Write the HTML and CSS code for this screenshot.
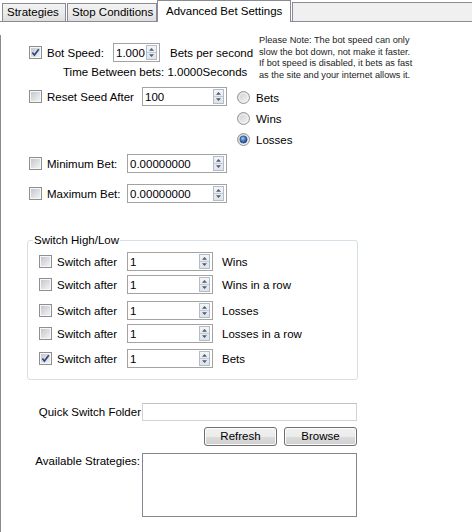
FILE: index.html
```html
<!DOCTYPE html>
<html>
<head>
<meta charset="utf-8">
<title>Advanced Bet Settings</title>
<link rel="stylesheet" href="styles.css">
</head>
<body>
<svg class="defs" width="0" height="0" aria-hidden="true">
  <defs>
    <linearGradient id="cbfill" x1="0" y1="0" x2="1" y2="1">
      <stop offset="0" stop-color="#c4c8ce"/>
      <stop offset="1" stop-color="#f2f2f2"/>
    </linearGradient>
    <linearGradient id="rdfill" x1="0" y1="0" x2="1" y2="1">
      <stop offset="0" stop-color="#c9ccd1"/>
      <stop offset="1" stop-color="#f6f6f6"/>
    </linearGradient>
    <radialGradient id="rddot" cx="0.4" cy="0.35" r="0.7">
      <stop offset="0" stop-color="#9fd0f5"/>
      <stop offset="0.5" stop-color="#3f7bc4"/>
      <stop offset="1" stop-color="#1b3f7c"/>
    </radialGradient>
    <linearGradient id="spfill" x1="0" y1="0" x2="0" y2="1">
      <stop offset="0" stop-color="#f3f5f8"/>
      <stop offset="1" stop-color="#dde3ea"/>
    </linearGradient>
  </defs>
</svg>

<div class="tabstrip">
  <div class="tab tab1">Strategies</div>
  <div class="tab tab2">Stop Conditions</div>
  <div class="tab active">Advanced Bet Settings</div>
  <div class="rest"></div>
</div>

<div class="panel">
  <div class="top">
    <div class="top-left">
      <div class="row r-speed">
        <svg class="cb" viewBox="0 0 13 13"><rect x=".5" y=".5" width="12" height="12" fill="#f7f7f7" stroke="#8e8f8f"/><rect x="2" y="2" width="9" height="9" fill="url(#cbfill)"/><path d="M3.3 6.5 L5.4 9.1 L9.8 3.3" fill="none" stroke="#34478a" stroke-width="1.7"/></svg>
        <span class="lbl w-speed">Bot Speed:</span>
        <div class="num w-46"><span class="val">1.000</span><svg class="spin" viewBox="0 0 11 15"><rect x=".5" y=".5" width="10" height="14" fill="url(#spfill)" stroke="#b4bcc7"/><line x1="1" y1="7.5" x2="10" y2="7.5" stroke="#c3cad3"/><path d="M5.5 3 L3 5.8 H8Z" fill="#4f5c6e"/><path d="M3 9.2 H8 L5.5 12Z" fill="#4f5c6e"/></svg></div>
        <span class="after">Bets per second</span>
      </div>
      <div class="time">Time Between bets: 1.0000Seconds</div>
    </div>
    <div class="note">Please Note: The bot speed can only<br>slow the bot down, not make it faster.<br>If bot speed is disabled, it bets as fast<br>as the site and your internet allows it.</div>
  </div>

  <div class="r-reset">
    <div class="row pad28">
      <svg class="cb" viewBox="0 0 13 13"><rect x=".5" y=".5" width="12" height="12" fill="#f7f7f7" stroke="#8e8f8f"/><rect x="2" y="2" width="9" height="9" fill="url(#cbfill)"/></svg>
      <span class="lbl w-reset">Reset Seed After</span>
      <div class="num w-85"><span class="val">100</span><svg class="spin" viewBox="0 0 11 15"><rect x=".5" y=".5" width="10" height="14" fill="url(#spfill)" stroke="#b4bcc7"/><line x1="1" y1="7.5" x2="10" y2="7.5" stroke="#c3cad3"/><path d="M5.5 3 L3 5.8 H8Z" fill="#4f5c6e"/><path d="M3 9.2 H8 L5.5 12Z" fill="#4f5c6e"/></svg></div>
    </div>
    <div class="radios">
      <div class="radio"><svg class="rd" viewBox="0 0 13 13"><circle cx="6.5" cy="6.5" r="6" fill="url(#rdfill)" stroke="#969799"/><circle cx="6.5" cy="6.5" r="4.3" fill="none" stroke="#f4f4f4" stroke-width=".8"/></svg><span>Bets</span></div>
      <div class="radio"><svg class="rd" viewBox="0 0 13 13"><circle cx="6.5" cy="6.5" r="6" fill="url(#rdfill)" stroke="#969799"/><circle cx="6.5" cy="6.5" r="4.3" fill="none" stroke="#f4f4f4" stroke-width=".8"/></svg><span>Wins</span></div>
      <div class="radio"><svg class="rd" viewBox="0 0 13 13"><circle cx="6.5" cy="6.5" r="6" fill="url(#rdfill)" stroke="#969799"/><circle cx="6.5" cy="6.5" r="3.6" fill="url(#rddot)" stroke="#23437c" stroke-width=".7"/></svg><span>Losses</span></div>
    </div>
  </div>

  <div class="row pad28 r-min">
    <svg class="cb" viewBox="0 0 13 13"><rect x=".5" y=".5" width="12" height="12" fill="#f7f7f7" stroke="#8e8f8f"/><rect x="2" y="2" width="9" height="9" fill="url(#cbfill)"/></svg>
    <span class="lbl w-bet">Minimum Bet:</span>
    <div class="num w-100"><span class="val">0.00000000</span><svg class="spin" viewBox="0 0 11 15"><rect x=".5" y=".5" width="10" height="14" fill="url(#spfill)" stroke="#b4bcc7"/><line x1="1" y1="7.5" x2="10" y2="7.5" stroke="#c3cad3"/><path d="M5.5 3 L3 5.8 H8Z" fill="#4f5c6e"/><path d="M3 9.2 H8 L5.5 12Z" fill="#4f5c6e"/></svg></div>
  </div>

  <div class="row pad28 r-max">
    <svg class="cb" viewBox="0 0 13 13"><rect x=".5" y=".5" width="12" height="12" fill="#f7f7f7" stroke="#8e8f8f"/><rect x="2" y="2" width="9" height="9" fill="url(#cbfill)"/></svg>
    <span class="lbl w-bet">Maximum Bet:</span>
    <div class="num w-100"><span class="val">0.00000000</span><svg class="spin" viewBox="0 0 11 15"><rect x=".5" y=".5" width="10" height="14" fill="url(#spfill)" stroke="#b4bcc7"/><line x1="1" y1="7.5" x2="10" y2="7.5" stroke="#c3cad3"/><path d="M5.5 3 L3 5.8 H8Z" fill="#4f5c6e"/><path d="M3 9.2 H8 L5.5 12Z" fill="#4f5c6e"/></svg></div>
  </div>

  <fieldset class="group">
    <legend>Switch High/Low</legend>
    <div class="grow g1">
      <svg class="cb" viewBox="0 0 13 13"><rect x=".5" y=".5" width="12" height="12" fill="#f7f7f7" stroke="#8e8f8f"/><rect x="2" y="2" width="9" height="9" fill="url(#cbfill)"/></svg>
      <span class="lbl w-sw">Switch after</span>
      <div class="num w-86"><span class="val">1</span><svg class="spin" viewBox="0 0 11 15"><rect x=".5" y=".5" width="10" height="14" fill="url(#spfill)" stroke="#b4bcc7"/><line x1="1" y1="7.5" x2="10" y2="7.5" stroke="#c3cad3"/><path d="M5.5 3 L3 5.8 H8Z" fill="#4f5c6e"/><path d="M3 9.2 H8 L5.5 12Z" fill="#4f5c6e"/></svg></div>
      <span class="suffix">Wins</span>
    </div>
    <div class="grow g2">
      <svg class="cb" viewBox="0 0 13 13"><rect x=".5" y=".5" width="12" height="12" fill="#f7f7f7" stroke="#8e8f8f"/><rect x="2" y="2" width="9" height="9" fill="url(#cbfill)"/></svg>
      <span class="lbl w-sw">Switch after</span>
      <div class="num w-86"><span class="val">1</span><svg class="spin" viewBox="0 0 11 15"><rect x=".5" y=".5" width="10" height="14" fill="url(#spfill)" stroke="#b4bcc7"/><line x1="1" y1="7.5" x2="10" y2="7.5" stroke="#c3cad3"/><path d="M5.5 3 L3 5.8 H8Z" fill="#4f5c6e"/><path d="M3 9.2 H8 L5.5 12Z" fill="#4f5c6e"/></svg></div>
      <span class="suffix">Wins in a row</span>
    </div>
    <div class="grow g3">
      <svg class="cb" viewBox="0 0 13 13"><rect x=".5" y=".5" width="12" height="12" fill="#f7f7f7" stroke="#8e8f8f"/><rect x="2" y="2" width="9" height="9" fill="url(#cbfill)"/></svg>
      <span class="lbl w-sw">Switch after</span>
      <div class="num w-86"><span class="val">1</span><svg class="spin" viewBox="0 0 11 15"><rect x=".5" y=".5" width="10" height="14" fill="url(#spfill)" stroke="#b4bcc7"/><line x1="1" y1="7.5" x2="10" y2="7.5" stroke="#c3cad3"/><path d="M5.5 3 L3 5.8 H8Z" fill="#4f5c6e"/><path d="M3 9.2 H8 L5.5 12Z" fill="#4f5c6e"/></svg></div>
      <span class="suffix">Losses</span>
    </div>
    <div class="grow g4">
      <svg class="cb" viewBox="0 0 13 13"><rect x=".5" y=".5" width="12" height="12" fill="#f7f7f7" stroke="#8e8f8f"/><rect x="2" y="2" width="9" height="9" fill="url(#cbfill)"/></svg>
      <span class="lbl w-sw">Switch after</span>
      <div class="num w-86"><span class="val">1</span><svg class="spin" viewBox="0 0 11 15"><rect x=".5" y=".5" width="10" height="14" fill="url(#spfill)" stroke="#b4bcc7"/><line x1="1" y1="7.5" x2="10" y2="7.5" stroke="#c3cad3"/><path d="M5.5 3 L3 5.8 H8Z" fill="#4f5c6e"/><path d="M3 9.2 H8 L5.5 12Z" fill="#4f5c6e"/></svg></div>
      <span class="suffix">Losses in a row</span>
    </div>
    <div class="grow g5">
      <svg class="cb" viewBox="0 0 13 13"><rect x=".5" y=".5" width="12" height="12" fill="#f7f7f7" stroke="#8e8f8f"/><rect x="2" y="2" width="9" height="9" fill="url(#cbfill)"/><path d="M3.3 6.5 L5.4 9.1 L9.8 3.3" fill="none" stroke="#34478a" stroke-width="1.7"/></svg>
      <span class="lbl w-sw">Switch after</span>
      <div class="num w-86"><span class="val">1</span><svg class="spin" viewBox="0 0 11 15"><rect x=".5" y=".5" width="10" height="14" fill="url(#spfill)" stroke="#b4bcc7"/><line x1="1" y1="7.5" x2="10" y2="7.5" stroke="#c3cad3"/><path d="M5.5 3 L3 5.8 H8Z" fill="#4f5c6e"/><path d="M3 9.2 H8 L5.5 12Z" fill="#4f5c6e"/></svg></div>
      <span class="suffix">Bets</span>
    </div>
  </fieldset>

  <div class="quick">
    <span class="side-lbl">Quick Switch Folder</span>
    <div class="folder"></div>
  </div>

  <div class="buttons">
    <div class="btn">Refresh</div>
    <div class="btn">Browse</div>
  </div>

  <div class="avail">
    <span class="side-lbl">Available Strategies:</span>
    <div class="listbox"></div>
  </div>
</div>
</body>
</html>
```

FILE: styles.css
```css
* { box-sizing: border-box; }

html, body {
  margin: 0;
  padding: 0;
  background: #fff;
}

body {
  width: 472px;
  height: 532px;
  overflow: hidden;
  font-family: "Liberation Sans", Arial, sans-serif;
  font-size: 11.5px;
  line-height: 14px;
  color: #000;
}

.defs { display: block; width: 0; height: 0; }

/* ---------- tabs ---------- */
.tabstrip {
  display: flex;
  height: 22px;
  padding-left: 2px;
  background: linear-gradient(to top, #898c95 0, #898c95 1px, transparent 1px);
}

.tab {
  margin-top: 3px;
  height: 18px;
  border: 1px solid #898c95;
  border-bottom: none;
  background: linear-gradient(#f3f3f3, #ebebeb 50%, #dedede);
  padding-left: 4px;
  line-height: 17px;
  white-space: nowrap;
  flex: none;
}

.tab1 { width: 64px; }
.tab2 { width: 90px; margin-left: 1px; }

.tab.active {
  margin-top: 0;
  height: 22px;
  width: 134px;
  background: #fff;
  padding-left: 8px;
  line-height: 21px;
}

.rest {
  flex: 1;
  margin-left: 1px;
  margin-top: 2px;
  height: 19px;
  border-top: 1px solid #898c95;
  border-left: 1px solid #898c95;
  background: #f0f0f0;
}

/* ---------- panel ---------- */
.panel {
  border-left: 1px solid #898c95;
  height: 510px;
}

.row {
  display: flex;
  align-items: center;
  height: 19px;
}

.pad28 { padding-left: 28px; }

.cb { width: 13px; height: 13px; flex: none; display: block; }
.rd { width: 13px; height: 13px; flex: none; display: block; }

.lbl { margin-left: 5px; white-space: nowrap; flex: none; }
.w-speed { width: 66px; }
.w-reset { width: 95px; }
.w-bet { width: 80px; }
.w-sw { width: 70px; }

.num {
  display: flex;
  align-items: center;
  height: 19px;
  border: 1px solid #a3a3a3;
  background: #fff;
  padding: 0 2px 0 2px;
  flex: none;
}
.num .val { flex: 1; white-space: nowrap; }
.spin { width: 11px; height: 15px; display: block; flex: none; }

.w-46 { width: 47px; }
.w-85 { width: 85px; }
.w-86 { width: 86px; }
.w-100 { width: 100px; }

/* top block */
.top { display: flex; margin-top: 13px; }
.top-left { width: 258px; flex: none; }
.r-speed { margin-top: 8px; padding-left: 28px; }
.after { margin-left: 10px; white-space: nowrap; }
.time {
  margin-top: 3px;
  padding-left: 62px;
  height: 14px;
  white-space: nowrap;
}
.note {
  font-size: 9.2px;
  line-height: 11.5px;
  color: #1c1c1c;
  white-space: nowrap;
}

/* reset seed */
.r-reset {
  display: flex;
  align-items: flex-start;
  margin-top: 6px;
}
.radios { margin-left: 10px; }
.radio {
  display: flex;
  align-items: center;
  height: 21px;
}
.radio span { margin-left: 6px; }

.r-min { margin-top: 4px; }
.r-max { margin-top: 11px; }

/* group */
.group {
  margin: 30px 0 0 26px;
  width: 331px;
  min-width: 0;
  border: 1px solid #d5dfe5;
  border-radius: 3px;
  padding: 5px 0 11px 0;
}
.group legend {
  padding: 0 1px;
  margin-left: 5px;
  line-height: 14px;
}
.grow {
  display: flex;
  align-items: center;
  height: 19px;
  padding-left: 11px;
}
.g2 { margin-top: 4px; }
.g3 { margin-top: 7px; }
.g4 { margin-top: 4px; }
.g5 { margin-top: 6px; }
.suffix { margin-left: 9px; white-space: nowrap; }

/* bottom */
.side-lbl {
  width: 141px;
  flex: none;
  text-align: right;
  padding-right: 1px;
  white-space: nowrap;
}

.quick {
  display: flex;
  align-items: center;
  margin-top: 23px;
}
.folder {
  width: 215px;
  height: 18px;
  border: 1px solid #d2d2d2;
  border-top-color: #c2c2c2;
  background: #fff;
}

.buttons {
  display: flex;
  gap: 7px;
  margin-top: 6px;
  padding-left: 203px;
}
.btn {
  width: 73px;
  height: 19px;
  border: 1px solid #707070;
  border-radius: 3px;
  background: linear-gradient(#f2f2f2 0%, #ebebeb 50%, #dddddd 50%, #cfcfcf 100%);
  box-shadow: inset 0 0 0 1px #fbfbfb;
  text-align: center;
  line-height: 17px;
}

.avail {
  display: flex;
  align-items: flex-start;
  margin-top: 7px;
}
.avail .side-lbl { padding-right: 2px; padding-top: 1px; }
.listbox {
  width: 215px;
  height: 64px;
  border: 1px solid #828790;
  background: #fff;
}
```
